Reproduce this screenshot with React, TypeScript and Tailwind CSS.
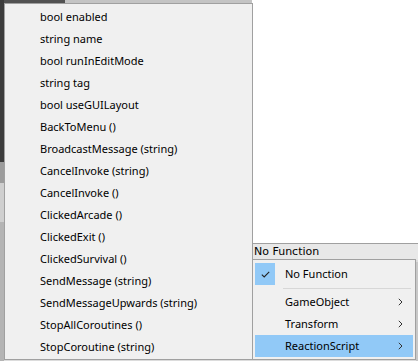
const members = [
  'bool enabled',
  'string name',
  'bool runInEditMode',
  'string tag',
  'bool useGUILayout',
  'BackToMenu ()',
  'BroadcastMessage (string)',
  'CancelInvoke (string)',
  'CancelInvoke ()',
  'ClickedArcade ()',
  'ClickedExit ()',
  'ClickedSurvival ()',
  'SendMessage (string)',
  'SendMessageUpwards (string)',
  'StopAllCoroutines ()',
  'StopCoroutine (string)',
]

const Chevron = () => (
  <svg width="5" height="8" viewBox="0 0 5 8" className="text-[#333]">
    <path d="M0.8 0.8 L4 4 L0.8 7.2" fill="none" stroke="currentColor" strokeWidth="1" />
  </svg>
)

const SubItem = ({ label, active }: { label: string; active?: boolean }) => (
  <div className={`flex items-center h-[22px] ${active ? 'bg-[#91c9f7]' : ''}`}>
    <span className="pl-[30px] flex-1 leading-[22px]">{label}</span>
    <span className="pr-[10px] flex items-center">
      <Chevron />
    </span>
  </div>
)

export default function App() {
  return (
    <div className="relative w-[418px] h-[361px] overflow-hidden bg-white flex font-['Noto_Sans',sans-serif] text-[11px] text-black">
      {/* window edge on the left */}
      <div className="w-[4px] shrink-0 flex flex-col">
        <div className="h-[162px] bg-[#3c3c3c]" />
        <div className="h-[21px] bg-[#9c9c9c]" />
        <div className="h-[39px] bg-[#cfcfcf]" />
        <div className="flex-1 bg-[#b4b4b4]" />
      </div>

      {/* inspector area behind the menus */}
      <div className="flex-1 flex flex-col">
        <div className="h-[3px] flex">
          <div className="w-[61px] bg-[#525252]" />
          <div className="w-[187px] bg-[#c4c4c4]" />
          <div className="flex-1 bg-white" />
        </div>
        <div className="h-[240px]" />
        <div className="h-[17px] border-t border-[#a0a0a0] bg-[#e8e8e8] flex items-center pl-[250px] font-['DejaVu_Sans',sans-serif] text-[11px]">
          No Function
        </div>
        <div className="flex-1 bg-[#dcdcdc]" />
      </div>

      {/* member list popup */}
      <div className="absolute left-[4px] top-[3px] w-[249px] h-[357px] bg-[#f0f0f0] border border-[#a0a0a0] py-[2px]">
        {members.map((m) => (
          <div key={m} className="h-[22px] leading-[22px] pl-[35px] whitespace-nowrap">
            {m}
          </div>
        ))}
      </div>

      {/* function popup */}
      <div className="absolute left-[252px] top-[259px] w-[164px] h-[101px] bg-[#f0f0f0] border border-[#a0a0a0] px-[2px] pt-[3px]">
        <div className="flex items-center h-[22px]">
          <div className="w-[20px] h-[22px] bg-[#91c9f7] flex items-center justify-center">
            <svg width="9" height="7" viewBox="0 0 9 7">
              <path d="M0.8 3.6 L3.2 6 L8.2 0.8" fill="none" stroke="#222" strokeWidth="1.1" />
            </svg>
          </div>
          <span className="pl-[10px] leading-[22px]">No Function</span>
        </div>
        <div className="h-[6px] flex items-center pl-[28px] pr-[2px]">
          <div className="h-px flex-1 bg-[#d7d7d7]" />
        </div>
        <SubItem label="GameObject" />
        <SubItem label="Transform" />
        <SubItem label="ReactionScript" active />
      </div>
      <div className="absolute left-[416px] top-[262px] w-[2px] h-[99px] bg-[#c8c8c8]" />
    </div>
  )
}
